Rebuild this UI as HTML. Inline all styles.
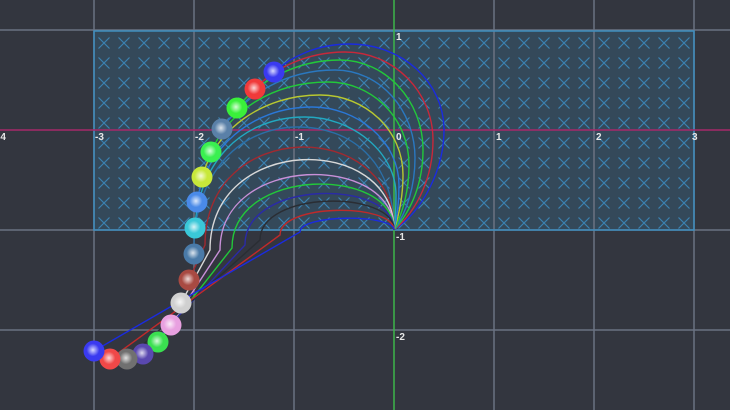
<!DOCTYPE html>
<html><head><meta charset="utf-8"><style>
html,body{margin:0;padding:0;background:#33363f;width:730px;height:410px;overflow:hidden}
text{font-family:"Liberation Sans",sans-serif;font-size:10px;font-weight:bold;fill:#e8e8e8}
</style></head><body>
<svg width="730" height="410" viewBox="0 0 730 410" xmlns="http://www.w3.org/2000/svg">
<defs>
<pattern id="xp" patternUnits="userSpaceOnUse" x="94" y="33" width="20" height="20">
<path d="M4.5,4.5 L15.5,15.5 M15.5,4.5 L4.5,15.5" stroke="#3a82b2" stroke-width="1.2" fill="none"/>
</pattern>
<radialGradient id="g" cx="0.45" cy="0.45" r="0.55"><stop offset="0" stop-color="#fff" stop-opacity="0.8"/><stop offset="0.55" stop-color="#fff" stop-opacity="0"/></radialGradient>
</defs>
<rect width="730" height="410" fill="#33363f"/>
<rect x="94" y="31" width="600" height="199" fill="#34495a"/>
<rect x="94" y="31" width="600" height="199" fill="url(#xp)"/>
<g stroke="#6b7282" stroke-width="1.5">
<line x1="94" y1="0" x2="94" y2="410"/><line x1="194" y1="0" x2="194" y2="410"/><line x1="294" y1="0" x2="294" y2="410"/>
<line x1="494" y1="0" x2="494" y2="410"/><line x1="594" y1="0" x2="594" y2="410"/><line x1="694" y1="0" x2="694" y2="410"/>
<line x1="0" y1="30" x2="730" y2="30"/><line x1="0" y1="230" x2="730" y2="230"/><line x1="0" y1="330" x2="730" y2="330"/>
</g>
<rect x="94" y="31" width="600" height="199" fill="none" stroke="#3f8fc0" stroke-width="1.5"/>
<line x1="0" y1="130" x2="730" y2="130" stroke="#a8286a" stroke-width="1.5"/>
<line x1="394" y1="0" x2="394" y2="410" stroke="#3cb54a" stroke-width="1.5"/>
<g fill="none" stroke-width="1.4">
<path d="M394,230 C424,210 444,168 444,130 C444,82 402,44 350,44 C318,44 292,56 274,72" stroke="#1a2be0"/>
<path d="M394,230 C418,210 433,176 433,140 C433,92 394,52 345,52 C305,52 272,70 255,89" stroke="#c8283a"/>
<path d="M394,230 C412,210 423,182 423,150 C423,100 385,60 340,60 C295,60 258,82 237,108" stroke="#22c83a"/>
<path d="M394,230 C407,212 415,186 415,158 C415,110 380,70 335,70 C285,70 245,95 222,129" stroke="#2a78c0"/>
<path d="M394,230 C403,212 409,190 409,165 C409,118 372,82 328,82 C272,82 228,112 211,152" stroke="#22c83a"/>
<path d="M394,230 C399,215 403,196 403,175 C403,130 365,95 320,95 C262,95 215,130 202,177" stroke="#b8c830"/>
<path d="M394,230 C397,218 399,202 399,185 C399,142 358,107 312,107 C250,107 205,150 197,202" stroke="#2a78d8"/>
<path d="M394,230 C395,222 396,208 396,195 C396,152 352,117 305,117 C240,117 198,165 195,228" stroke="#22a8c0"/>
<path d="M394,230 C394,160 350,127 298,127 C235,127 192,180 194,254" stroke="#2a6fa8"/>
<path d="M394,230 C394,117 205,117 205,245 L189,280" stroke="#a02a30"/>
<path d="M394,230 C394,133 210,133 210,250 L181,303" stroke="#d8d8d8"/>
<path d="M394,230 C394,153 220,153 220,250 L171,325" stroke="#c890d8"/>
<path d="M394,230 C394,166 232,166 232,248 L158,342" stroke="#22c83a"/>
<path d="M394,230 C394,179 245,179 245,245 L143,354" stroke="#2a2aa8"/>
<path d="M394,230 C394,190 260,190 260,240 L127,359" stroke="#2a2d33"/>
<path d="M394,230 C394,203 280,203 280,235 L110,359" stroke="#c02a2a"/>
<path d="M394,230 C394,214 300,214 300,232 L94,351" stroke="#1a2be0"/>
</g>
<g>
<circle cx="274" cy="72" r="10.5" fill="#3a3af0"/>
<circle cx="255" cy="89" r="10.5" fill="#f03a3a"/>
<circle cx="237" cy="108" r="10.5" fill="#3af03a"/>
<circle cx="222" cy="129" r="10.5" fill="#5a80a8"/>
<circle cx="211" cy="152" r="10.5" fill="#3af050"/>
<circle cx="202" cy="177" r="10.5" fill="#c8e83a"/>
<circle cx="197" cy="202" r="10.5" fill="#4a8ae8"/>
<circle cx="195" cy="228" r="10.5" fill="#3ac8d8"/>
<circle cx="194" cy="254" r="10.5" fill="#4a7aa8"/>
<circle cx="189" cy="280" r="10.5" fill="#a84a42"/>
<circle cx="181" cy="303" r="10.5" fill="#d0d0d0"/>
<circle cx="171" cy="325" r="10.5" fill="#e8a0e0"/>
<circle cx="158" cy="342" r="10.5" fill="#3ae050"/>
<circle cx="143" cy="354" r="10.5" fill="#5a48b0"/>
<circle cx="127" cy="359" r="10.5" fill="#707070"/>
<circle cx="110" cy="359" r="10.5" fill="#f04848"/>
<circle cx="94" cy="351" r="10.5" fill="#3a3af0"/>
</g>
<g fill="url(#g)">
<circle cx="274" cy="72" r="10.5"/><circle cx="255" cy="89" r="10.5"/><circle cx="237" cy="108" r="10.5"/><circle cx="222" cy="129" r="10.5"/><circle cx="211" cy="152" r="10.5"/><circle cx="202" cy="177" r="10.5"/><circle cx="197" cy="202" r="10.5"/><circle cx="195" cy="228" r="10.5"/><circle cx="194" cy="254" r="10.5"/><circle cx="189" cy="280" r="10.5"/><circle cx="181" cy="303" r="10.5"/><circle cx="171" cy="325" r="10.5"/><circle cx="158" cy="342" r="10.5"/><circle cx="143" cy="354" r="10.5"/><circle cx="127" cy="359" r="10.5"/><circle cx="110" cy="359" r="10.5"/><circle cx="94" cy="351" r="10.5"/>
</g>
<text x="-3" y="140">-4</text>
<text x="95" y="140">-3</text>
<text x="195" y="140">-2</text>
<text x="295" y="140">-1</text>
<text x="396" y="140">0</text>
<text x="496" y="140">1</text>
<text x="596" y="140">2</text>
<text x="692" y="140">3</text>
<text x="396" y="40">1</text>
<text x="396" y="240">-1</text>
<text x="396" y="340">-2</text>
</svg>
</body></html>
